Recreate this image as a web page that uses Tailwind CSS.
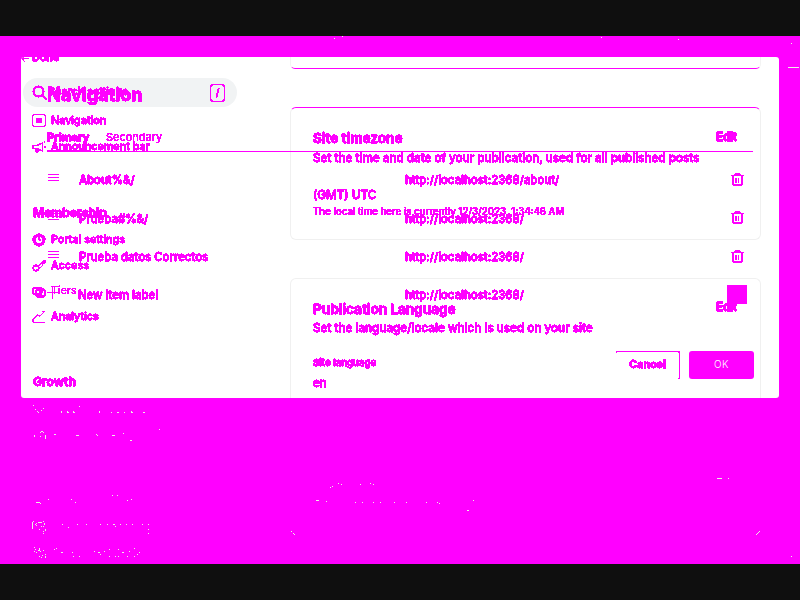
<!DOCTYPE html>
<html lang="en">
<head>
<meta charset="utf-8">
<title>Navigation settings</title>
<script src="https://cdn.jsdelivr.net/npm/@tailwindcss/browser@4"></script>
</head>
<body class="w-[800px] h-[600px] overflow-hidden bg-[#0f0f0f] py-9 font-['Inter',sans-serif] text-[#ff00ff]">
<svg class="hidden">
  <symbol id="trash" viewBox="0 0 13 13"><path d="M0 2.5h13M4 .5h5M3.5 1v1M9.5 1v1M2 12.5h9M2 11.5h9M3 1.5h7" fill="none" stroke="#f0f" shape-rendering="crispEdges"/><path d="M5 5v5M7.5 5v5M1 3h2v9H1zM10 3h2v9h-2zM4 5h2v5H4zM7 5h1v5H7z" fill="#f0f" shape-rendering="crispEdges"/></symbol>
  <symbol id="grip" viewBox="0 0 11 8"><path d="M0 .5h11M0 3.5h11M0 6.5h11" stroke="#f0f"/></symbol>
</svg>
<svg class="absolute size-0"><filter id="crisp" color-interpolation-filters="sRGB" x="0" y="0" width="1" height="1"><feComponentTransfer><feFuncA type="discrete" tableValues="0 1 1 1 1 1 1 1 1 1"/></feComponentTransfer></filter></svg>
<main class="relative h-[528px] bg-[#ff00ff] px-[21px] pt-[21px]">
  <div class="grid h-[341px] overflow-hidden rounded-[3px] bg-white">
    <!-- Card outlines and search field -->
    <div class="col-start-1 row-start-1 flex h-[341px] pl-[2px] pr-[18px]">
      <div class="mt-[21px] h-[29px] w-[214px] rounded-full bg-[#f1f3f4]"></div>
      <div class="ml-[53px] flex w-[471px] flex-col">
        <div class="h-[12px] shrink-0 rounded-b-[5px] border border-t-0 border-x-[#f3f3f3] border-b-[#ff00ff]"></div>
        <div class="mt-[38px] h-[133px] shrink-0 rounded-[6px] border border-[#f0f0f0] border-t-[#ff00ff]"></div>
        <div class="mt-[38px] h-[140px] shrink-0 rounded-t-[6px] border border-b-0 border-[#f0f0f0]"></div>
      </div>
    </div>
    <!-- Settings page -->
    <div class="col-start-1 row-start-1 flex h-[341px] overflow-hidden [-webkit-text-stroke:0.3px_#f0f] [filter:url(#crisp)]">
      <div class="-mt-[7px] w-[216px] shrink-0 pl-[11px] text-[10.8px] font-medium">
        <div class="-ml-[11px] flex h-[16px] items-center gap-[3px]"><svg class="h-[9px] w-2" viewBox="0 0 8 9"><path d="M8 4.5H1M4 1L.7 4.5 4 8" fill="none" stroke="#f0f"/></svg><span class="font-semibold">Done</span></div>
        <div class="mt-[12px] flex h-[29px] items-center">
          <svg class="size-[15px]" viewBox="0 0 15 15"><circle cx="6.5" cy="6.5" r="5" fill="none" stroke="#f0f" stroke-width="1.5"/><path d="M10 10l4.2 4.2" stroke="#f0f" stroke-width="1.6"/></svg>
          <span class="w-[163px] pl-px">Search settings</span>
          <span class="flex h-[18px] w-[15px] items-center justify-center rounded-[3px] border border-[#ff00ff] text-[10px] font-medium">/</span>
        </div>
        <div class="mt-px flex h-[26px] items-center gap-[5px]"><svg class="size-[14px]" viewBox="0 0 14 14"><rect x=".5" y=".5" width="13" height="12" rx="2" fill="none" stroke="#f0f"/><path d="M4 4h6v4H4zM4 8h6v1H4z" fill="#f0f"/></svg><span>Navigation</span></div>
        <div class="flex h-[26px] items-center gap-[5px]"><svg class="size-[14px]" viewBox="0 0 14 14"><path d="M1 5.5h3.5L10.5 3v8L4.5 8.5H1zM4 9v3h2V9M12.5 1v2M12 7h2" fill="none" stroke="#f0f" stroke-width=".8"/></svg><span>Announcement bar</span></div>
        <div class="mt-[40px] flex h-[26px] items-center pl-px text-[12px] font-bold">Membership</div>
        <div class="mt-[1px] flex h-[26px] items-center gap-[5px]"><svg class="size-[14px]" viewBox="0 0 14 14"><circle cx="7" cy="7" r="4.8" fill="none" stroke="#f0f" stroke-width="2.8"/><path d="M7 4v3h2" fill="none" stroke="#f0f"/></svg><span>Portal settings</span></div>
        <div class="flex h-[26px] items-center gap-[5px]"><svg class="size-[14px]" viewBox="0 0 14 14"><circle cx="4" cy="9" r="2.7" fill="none" stroke="#f0f" stroke-width="1.2"/><path d="M6 7l6-5.5h1V4L10.5 4.5v2L8 9" fill="none" stroke="#f0f" stroke-width=".8"/></svg><span>Access</span></div>
        <div class="flex h-[25px] items-center gap-[5px]"><svg class="size-[14px]" viewBox="0 0 14 14"><rect x=".7" y="3" width="9" height="6" rx="2" fill="none" stroke="#f0f" stroke-width="1.3"/><rect x="4" y="4.5" width="9" height="7" rx="2" fill="none" stroke="#f0f" stroke-width="1.3"/><path d="M7 6.5h3v3H7z" fill="#f0f"/></svg><span class="font-normal [-webkit-text-stroke:0]">Tiers</span></div>
        <div class="flex h-[26px] items-center gap-[5px]"><svg class="size-[14px]" viewBox="0 0 14 14"><path d="M1 9.5l4-4.5 3 1 4-4M10 1.5h3M1 9v3M1 12.5h12" fill="none" stroke="#f0f" stroke-width=".7"/></svg><span>Analytics</span></div>
        <div class="mt-[39px] flex h-[26px] items-center pl-px text-[12px] font-bold">Growth</div>
      </div>
      <div class="ml-[76px] mt-[70px] w-[424px] shrink-0 whitespace-nowrap text-[11.7px] font-medium">
        <div class="flex h-[22px] items-center justify-between"><h2 class="text-[13.5px] font-bold">Site timezone</h2><span class="mb-[2px] text-[11.1px] font-bold">Edit</span></div>
        <p class="flex h-[20px] items-center">Set the time and date of your publication, used for all published posts</p>
        <p class="mt-[17px] flex h-[19px] items-center">(GMT) UTC</p>
        <p class="flex h-[14px] items-center text-[9.7px] [-webkit-text-stroke:0.1px_#f0f]">The local time here is currently 12/3/2023, 1:34:46 AM</p>
        <div class="mt-[79px] flex h-[22px] items-center justify-between"><h2 class="text-[13.5px] font-bold">Publication Language</h2><span class="mb-[4px] text-[11.1px] font-bold">Edit</span></div>
        <p class="flex h-[17px] items-center">Set the language/locale which is used on your site</p>
        <p class="mt-[18px] flex h-[17px] items-center text-[9.6px] font-semibold">Site language</p>
        <p class="mt-[2px] flex h-[20px] items-center">en</p>
      </div>
    </div>
    <!-- Navigation dialog -->
    <div class="col-start-1 row-start-1 h-[341px] overflow-hidden pl-[26px] pt-[25px] text-[11.4px] font-medium [-webkit-text-stroke:0.3px_#f0f] [filter:url(#crisp)]">
      <h1 class="flex h-[26px] items-center text-[18.1px] font-bold">Navigation</h1>
      <div class="mt-[21px] flex h-[23px] w-[706px] gap-[17px] border-b border-[#ff00ff] text-[11px] leading-[17px]"><span class="w-[42px] border-b border-[#ff00ff] font-bold">Primary</span><span class="font-normal [-webkit-text-stroke:0]">Secondary</span></div>
      <div class="mt-[9px] flex h-[38px] items-center"><svg class="mb-[4px] ml-px h-2 w-[11px]"><use href="#grip"/></svg><span class="ml-[20px] w-[326px] pt-[2px]">About%&amp;/</span><span class="w-[326px] pt-[2px]">http://localhost:2368/about/</span><svg class="mb-[2px] size-[13px]"><use href="#trash"/></svg></div>
      <div class="flex h-[39px] items-center"><svg class="mb-[4px] ml-px h-2 w-[11px]"><use href="#grip"/></svg><span class="ml-[20px] w-[326px] pt-[2px]">Prueba#%&amp;/</span><span class="w-[326px] pt-[2px]">http://localhost:2368/</span><svg class="mb-[2px] size-[13px]"><use href="#trash"/></svg></div>
      <div class="flex h-[38px] items-center"><svg class="mb-[4px] ml-px h-2 w-[11px]"><use href="#grip"/></svg><span class="ml-[20px] w-[326px] pt-[2px]">Prueba datos Correctos</span><span class="w-[326px] pt-[2px]">http://localhost:2368/</span><svg class="mb-px size-[13px]"><use href="#trash"/></svg></div>
      <div class="flex h-[38px] items-center"><svg class="mb-[6px] h-[13px] w-[11px]" viewBox="0 0 11 13"><path d="M0 6.5h11M5.5 0v13" stroke="#f0f"/></svg><span class="ml-[20px] w-[327px] pt-[2px]">New item label</span><span class="w-[322px] pt-[2px]">http://localhost:2368/</span><span class="mb-[2px] h-[19px] w-5 rounded-[2px] bg-[#ff00ff]"></span></div>
      <div class="mt-[37px] flex h-7 gap-[9px] pl-[569px] text-[10.8px] font-bold"><button class="w-[64px] rounded-[2px] border-r border-t border-[#ff00ff]">Cancel</button></div>
    </div>
    <div class="col-start-1 row-start-1 flex h-[341px] justify-end pr-[25px] pt-[294px]"><button class="h-7 w-[65px] rounded-[3px] bg-[#ff00ff] pb-px text-[10px] font-light tracking-[0.5px] text-white">OK</button></div>
  </div>
  <!-- Isolated light pixels around the panel -->
  <svg class="absolute left-0 top-0 h-[528px] w-[800px]" viewBox="0 36 800 528" shape-rendering="crispEdges"><path id="specks" fill="#edf0e6"/></svg>
</main>
<script>
const dots = `33,405 35,409 37,411 38,412 41,410 43,408 79,406 61,411 61,412 67,411 67,412,2 73,411 73,412,2 99,411 99,412 111,412 117,412,2 124,412 131,411 131,412,2 143,412,2
40,432 41,431,2 43,432 34,435,1,2 40,436 45,435,1,4 54,434,2 76,435,3 96,434 97,435 112,435,3 123,433 159,429 130,440,2
36,502,4 40,503 48,499 71,499 75,502 112,495 117,495 127,500 131,499
32,522,1,7 33,521 38,522,4 43,521 44,523,1,2 35,524 36,523 36,525 41,526 43,526 39,529 45,529,1,2 43,531 43,533
62,524 77,524 86,524 100,524 107,524 113,524,2 120,524 126,524 132,524 142,524 148,524 68,527 115,526 148,529 148,533
34,547 35,549 34,551 36,552 39,548,1,2 38,550,2 40,551 43,550 45,554 42,555 39,556 41,557 45,556,1,2 54,549 56,548 61,552,2 72,552 73,556 79,556
94,551 98,552,2 100,554 104,551 109,549 109,556 115,556 118,549 118,556 122,552,2 129,551 127,556 134,548 134,556 137,554 139,552
330,487 332,486 338,483 341,484 360,484 370,483 373,484 316,500,3 326,501 355,502 362,502 373,502 380,502 394,502 406,502 426,502 437,502 439,503 473,500 467,510,2 291,531 293,533 294,534
717,478,5 728,478 756,534 757,533 758,532 759,531 791,556 334,38 342,36 601,37 678,39 791,43 788,67,11`;
document.getElementById('specks').setAttribute('d', dots.split(/\s+/).map(s => {
  const [x, y, w = 1, h = 1] = s.split(',').map(Number);
  return `M${x} ${y}h${w}v${h}h${-w}z`;
}).join(''));
</script>
</body>
</html>
